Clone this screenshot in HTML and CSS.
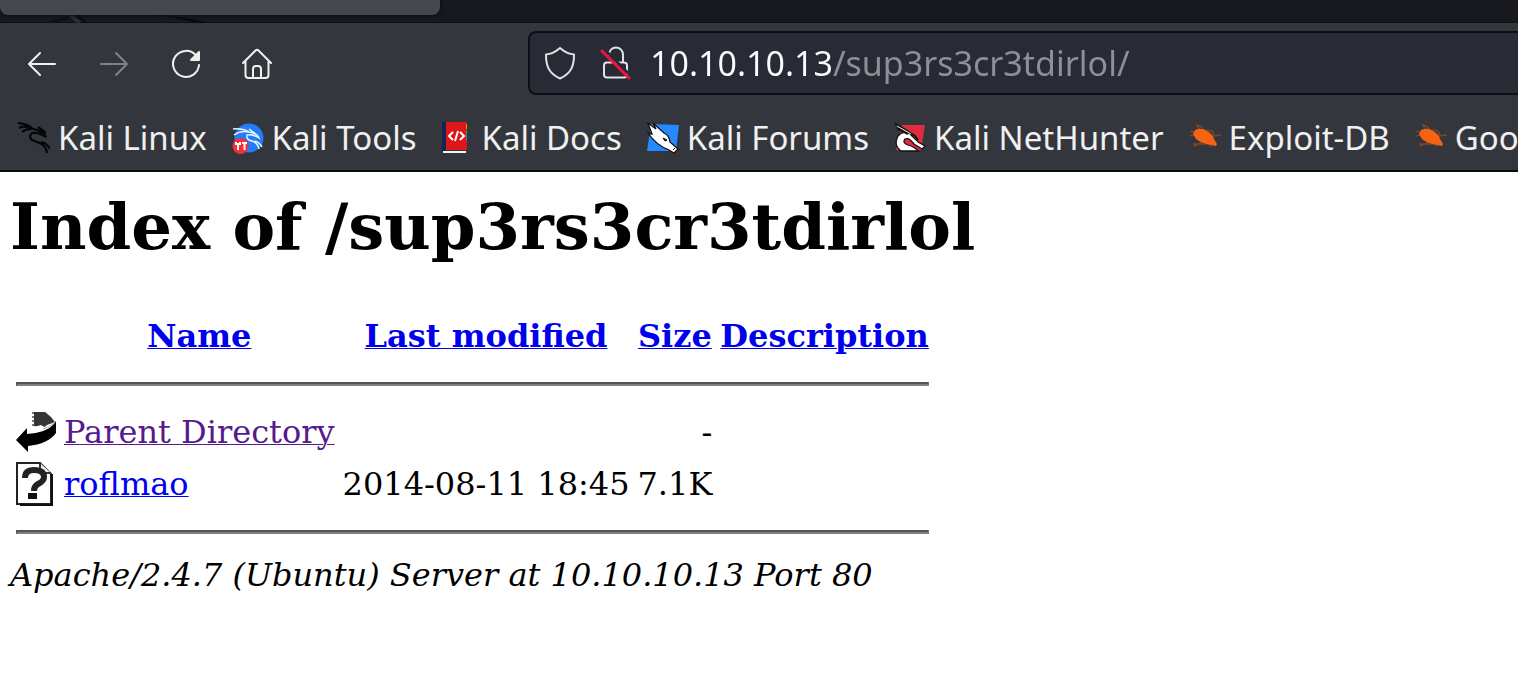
FILE: index.html
```
<!DOCTYPE html>
<html lang="en">
<head>
<meta charset="utf-8">
<title>Index of /sup3rs3cr3tdirlol</title>
<link rel="stylesheet" href="styles.css">
</head>
<body>
<header class="browser">
  <div class="tabstrip">
    <svg class="tabstrip-art" width="240" height="23" viewBox="0 0 240 23" aria-hidden="true"><path d="M44 23 72 15H80L88 23H82L74 17 56 23Z" fill="#0e0f12"/><path d="M70 15 80 23" stroke="#292b31" stroke-width="4"/><path d="M154 15Q184 16 208 23H196Q176 17 154 15Z" fill="#090a0c"/></svg>
    <div class="tab"></div>
  </div>
  <div class="toolbar">
    <nav class="nav-buttons" aria-label="Navigation">
      <button class="nav-button" type="button" aria-label="Back"><svg width="32" height="32" viewBox="0 0 32 32"><path d="M29 16H3M14 5 3 16l11 11"/></svg></button>
      <button class="nav-button" type="button" aria-label="Forward" disabled><svg width="32" height="32" viewBox="0 0 32 32"><path d="M3 16h26M18 5l11 11-11 11"/></svg></button>
      <button class="nav-button" type="button" aria-label="Reload"><svg width="32" height="32" viewBox="0 0 32 32"><path d="M26 7.500A13 13 0 1 0 29 17"/><path class="solid" d="M29 4v8H21Z"/></svg></button>
      <button class="nav-button" type="button" aria-label="Home"><svg width="32" height="32" viewBox="0 0 32 32"><path d="M1 15 13.500 2.500q1.500-1.500 3 0L29 15M3.500 13v14q0 3 3 3h17q3 0 3-3V13M11 30V21q0-3 3-3h2q3 0 3 3v9"/></svg></button>
    </nav>
    <form class="urlbar">
      <svg class="urlbar-icon" width="32" height="36" viewBox="0 0 32 36" aria-hidden="true"><path d="M16 3Q23 9 30 9.500C30 20 28 28 16 33.500C4 28 2 20 2 9.500Q9 9 16 3Z"/></svg>
      <svg class="urlbar-icon" width="32" height="36" viewBox="0 0 32 36" aria-hidden="true"><path d="M9 9V10C9 0 23 0 23 10v7M7 17.500h17q3 0 3 3v9q0 3-3 3H7q-3 0-3-3v-9q0-3 3-3Z"/><path class="under" d="m5 5 26 26"/><path class="slash" d="m2 6 27 27"/></svg>
      <input class="url" type="text" aria-label="Address" spellcheck="false" value="10.10.10.13/sup3rs3cr3tdirlol/">
    </form>
  </div>
  <nav class="bookmarks" aria-label="Bookmarks">
    <a class="bookmark" href="#"><svg width="32" height="32" viewBox="0 0 32 32"><path d="M0 1Q9 2 14 6M1 6Q8 3 15 7M4 10Q9 6 16 7Q24 9 28 15Q21 10 14 11Q10 15 14 18C20 21 27 20 29 31M23 20Q29 21 32 27M20 5l8 6" fill="none" stroke="#050505" stroke-width="2.200"/></svg>Kali Linux</a>
    <a class="bookmark" href="#"><svg width="32" height="32" viewBox="0 0 32 32"><circle cx="17" cy="16" r="14.500" fill="#247cfb"/><path d="M1 7Q10 6 17 10M2 13Q9 8 17 10Q25 11 27 16Q21 12 15 13Q14 18 20 19Q26 21 27 27M17 7l8 6M23 19q5 2 7 6" fill="none" stroke="#e8f4ff" stroke-width="1.500"/><circle cx="8.500" cy="24" r="8" fill="#f33236"/><path d="M4 20v2h4v-2M6 22v6M10 21h5M12.500 21v7" fill="none" stroke="#fff" stroke-width="2"/></svg>Kali Tools</a>
    <a class="bookmark" href="#"><svg width="32" height="32" viewBox="0 0 32 32"><path d="M5 0h21v28H5z" fill="#dc1717"/><path d="M1 0h4v31H1z" fill="#102653"/><path d="M2 29h23v2H2z" fill="#f4f4f4"/><path d="M25 2h1v5h-1z" fill="#f78b19"/><path d="M25 8h1v6h-1z" fill="#22a55a"/><path d="M25 14h1v5h-1z" fill="#3378ff"/><path d="m12 10-4 4 4 4M14 19l3-10M19 10l4 4-4 4" fill="none" stroke="#fff" stroke-width="2"/></svg>Kali Docs</a>
    <a class="bookmark" href="#"><svg width="32" height="32" viewBox="0 0 32 32"><path d="M4 2 32 3 29 29H0Z" fill="#2589ff"/><path d="M1 1 9 7 6 1 17 11Q22 13 23 20L31 27 27 31 22 28Q9 23 1 11L5 12Z" fill="#fff" stroke="#111" stroke-width="1.300"/><path d="m16 16 4 2-2 1ZM26 28l2-2" fill="#111" stroke="#111"/></svg>Kali Forums</a>
    <a class="bookmark" href="#"><svg width="32" height="32" viewBox="0 0 32 32"><path d="M8 3 31 3 27 28H2Z" fill="#df2b3c"/><path d="M4 14Q9 8 16 12L24 20 31 24 28 27 20 22Q15 15 11 17Q8 21 14 23Q21 25 24 29H7Q-1 23 4 14Z" fill="#fff" stroke="#111" stroke-width="1.300"/><path d="m1 2 6 3 14 9 3 4M3 6l11 6" fill="none" stroke="#111" stroke-width="2"/><path d="m3 4 14 8M20 18l3 2" stroke="#eee"/></svg>Kali NetHunter</a>
    <a class="bookmark" href="#"><svg width="32" height="32" viewBox="0 0 32 32"><path d="m5 10-4-1M5 13l-4 1M10 7 8 3l5 2 2 4M17 8l6 1 2 4M24 14l8-1M22 22H4M14 20l-9 4M20 21l2 4" fill="none" stroke="#93501f" stroke-width="1.500" opacity=".7"/><path d="M6 8q7-3 12 1 6 3 7 8l3 5-1 2-5-1Q12 21 7 17L4 12Z" fill="#f56313"/></svg>Exploit-DB</a>
    <a class="bookmark" href="#"><svg width="32" height="32" viewBox="0 0 32 32"><path d="m5 10-4-1M5 13l-4 1M10 7 8 3l5 2 2 4M17 8l6 1 2 4M24 14l8-1M22 22H4M14 20l-9 4M20 21l2 4" fill="none" stroke="#93501f" stroke-width="1.500" opacity=".7"/><path d="M6 8q7-3 12 1 6 3 7 8l3 5-1 2-5-1Q12 21 7 17L4 12Z" fill="#f56313"/></svg>Google Hacking DB</a>
  </nav>
</header>
<main class="listing">
  <h1 class="title">Index of /sup3rs3cr3tdirlol</h1>
  <table class="files">
    <thead>
      <tr><th class="icon-cell"></th><th><a href="#">Name</a></th><th><a href="#">Last modified</a></th><th><a href="#">Size</a></th><th><a href="#">Description</a></th></tr>
      <tr><th colspan="5"><hr class="rule"></th></tr>
    </thead>
    <tbody>
      <tr>
        <td class="icon-cell"><svg width="40" height="44" viewBox="0 0 40 44" role="img" aria-label="Parent"><path d="M18 2h11l6 5 4 5-8 3-4 3-9-2Z" fill="#353535"/><path d="M17 2v16" stroke="#777" stroke-width="2" stroke-dasharray="2 2"/><path d="m18 17 7-2 5 3-3 2" fill="#fff"/><path d="M0 30 11 18v6Q30 23 38 14L40 11V23Q32 34 12 36v6Z" fill="#000"/><path d="M27 19q8-3 11-6" fill="none" stroke="#aaa" stroke-width="1"/></svg></td>
        <td><a class="visited" href="#">Parent Directory</a></td><td></td><td class="number">-</td><td></td>
      </tr>
      <tr>
        <td class="icon-cell"><svg width="40" height="44" viewBox="0 0 40 44" role="img" aria-label="File"><path d="M1 1h23l11 11v30H1Z" fill="#fff" stroke="#222" stroke-width="2"/><path d="M4 43h32V12" fill="none" stroke="#111" stroke-width="2"/><path d="M24 1v10h11" fill="#eee" stroke="#333" stroke-width="2"/><path d="M9 16q0-8 9-8 10 0 10 7 0 4-6 7-4 2-4 7" fill="none" stroke="#222" stroke-width="6"/><path d="M12 31h9v6h-9z" fill="#111"/></svg></td>
        <td><a href="#">roflmao</a></td><td class="number">2014-08-11 18:45</td><td class="number">7.1K</td><td></td>
      </tr>
      <tr><td colspan="5"><hr class="rule"></td></tr>
    </tbody>
  </table>
  <address class="server">Apache/2.4.7 (Ubuntu) Server at 10.10.10.13 Port 80</address>
</main>
</body>
</html>
```
FILE: styles.css
```
body {
  margin: 0;
  background: #fff;
  color: #000;
  font: 32px "DejaVu Serif", serif;
}

.browser {
  overflow: hidden;
  background: #34363e;
  border-bottom: 2px solid #0c0c0f;
  color: #f0f0ee;
  font: 33px "Noto Sans", sans-serif;
}

.tabstrip {
  position: relative;
  height: 22px;
  background: #18191e;
  border-bottom: 1px solid #101115;
}

.tabstrip-art {
  position: absolute;
  top: 0;
  left: 0;
}

.tab {
  position: relative;
  width: 440px;
  height: 15px;
  background: #44474e;
  border-radius: 0 0 8px 8px;
  box-shadow: 0 0 4px #08090b;
}

.toolbar {
  display: flex;
  align-items: center;
  gap: 254px;
  padding: 8px 0 8px 26px;
}

.nav-buttons {
  display: flex;
  flex: none;
  gap: 40px;
  padding-top: 2px;
}

.nav-button {
  display: flex;
  padding: 0;
  border: 0;
  background: none;
  color: #f0f0ee;
}

.nav-button:disabled {
  color: #818286;
}

.nav-button path,
.urlbar-icon path {
  fill: none;
  stroke: currentColor;
  stroke-width: 2;
  stroke-linecap: round;
  stroke-linejoin: round;
}

.nav-button .solid {
  fill: currentColor;
}

.urlbar {
  box-sizing: border-box;
  display: flex;
  flex: 1;
  align-items: center;
  gap: 24px;
  height: 64px;
  padding-left: 14px;
  border: 2px solid #0e0f13;
  border-right: 0;
  border-radius: 8px 0 0 8px;
  background: #282a35;
}

.urlbar-icon {
  flex: none;
  color: #e2e2e4;
}

.urlbar-icon .under {
  stroke: #282a35;
  stroke-width: 3;
}

.urlbar-icon .slash {
  stroke: #f0123f;
  stroke-width: 3;
}

.url {
  flex: 1;
  min-width: 0;
  height: 60px;
  margin-left: -6px;
  padding: 0;
  border: 0;
  outline: 0;
  background: linear-gradient(to right, #fbfbfe 183px, #8f9095 183px);
  -webkit-background-clip: text;
  background-clip: text;
  color: transparent;
  font: inherit;
  font-size: 34px;
}

.bookmarks {
  display: flex;
  align-items: center;
  gap: 25px;
  height: 65px;
  padding: 2px 0 0 18px;
}

.bookmark {
  display: flex;
  flex: none;
  align-items: center;
  gap: 8px;
  color: inherit;
  text-decoration: none;
  white-space: nowrap;
}

.bookmark svg {
  flex: none;
}

.listing {
  padding: 17px 10px;
}

.title {
  margin: 0 0 44px;
  font-size: 64px;
  line-height: 75px;
}

.files {
  border-spacing: 4px;
  line-height: 38px;
}

.files th,
.files td {
  padding: 2px;
}

.files .icon-cell {
  width: 40px;
  height: 44px;
}

.icon-cell svg {
  display: block;
}

.files .number {
  text-align: right;
  white-space: nowrap;
}

.listing a {
  color: #00e;
  text-decoration-thickness: 1px;
}

.listing .visited {
  color: #551a8b;
}

.rule {
  margin: 16px 0;
  border: 2px solid;
  border-color: #555 #808080 #808080 #555;
}

.server {
  line-height: 38px;
}
```
